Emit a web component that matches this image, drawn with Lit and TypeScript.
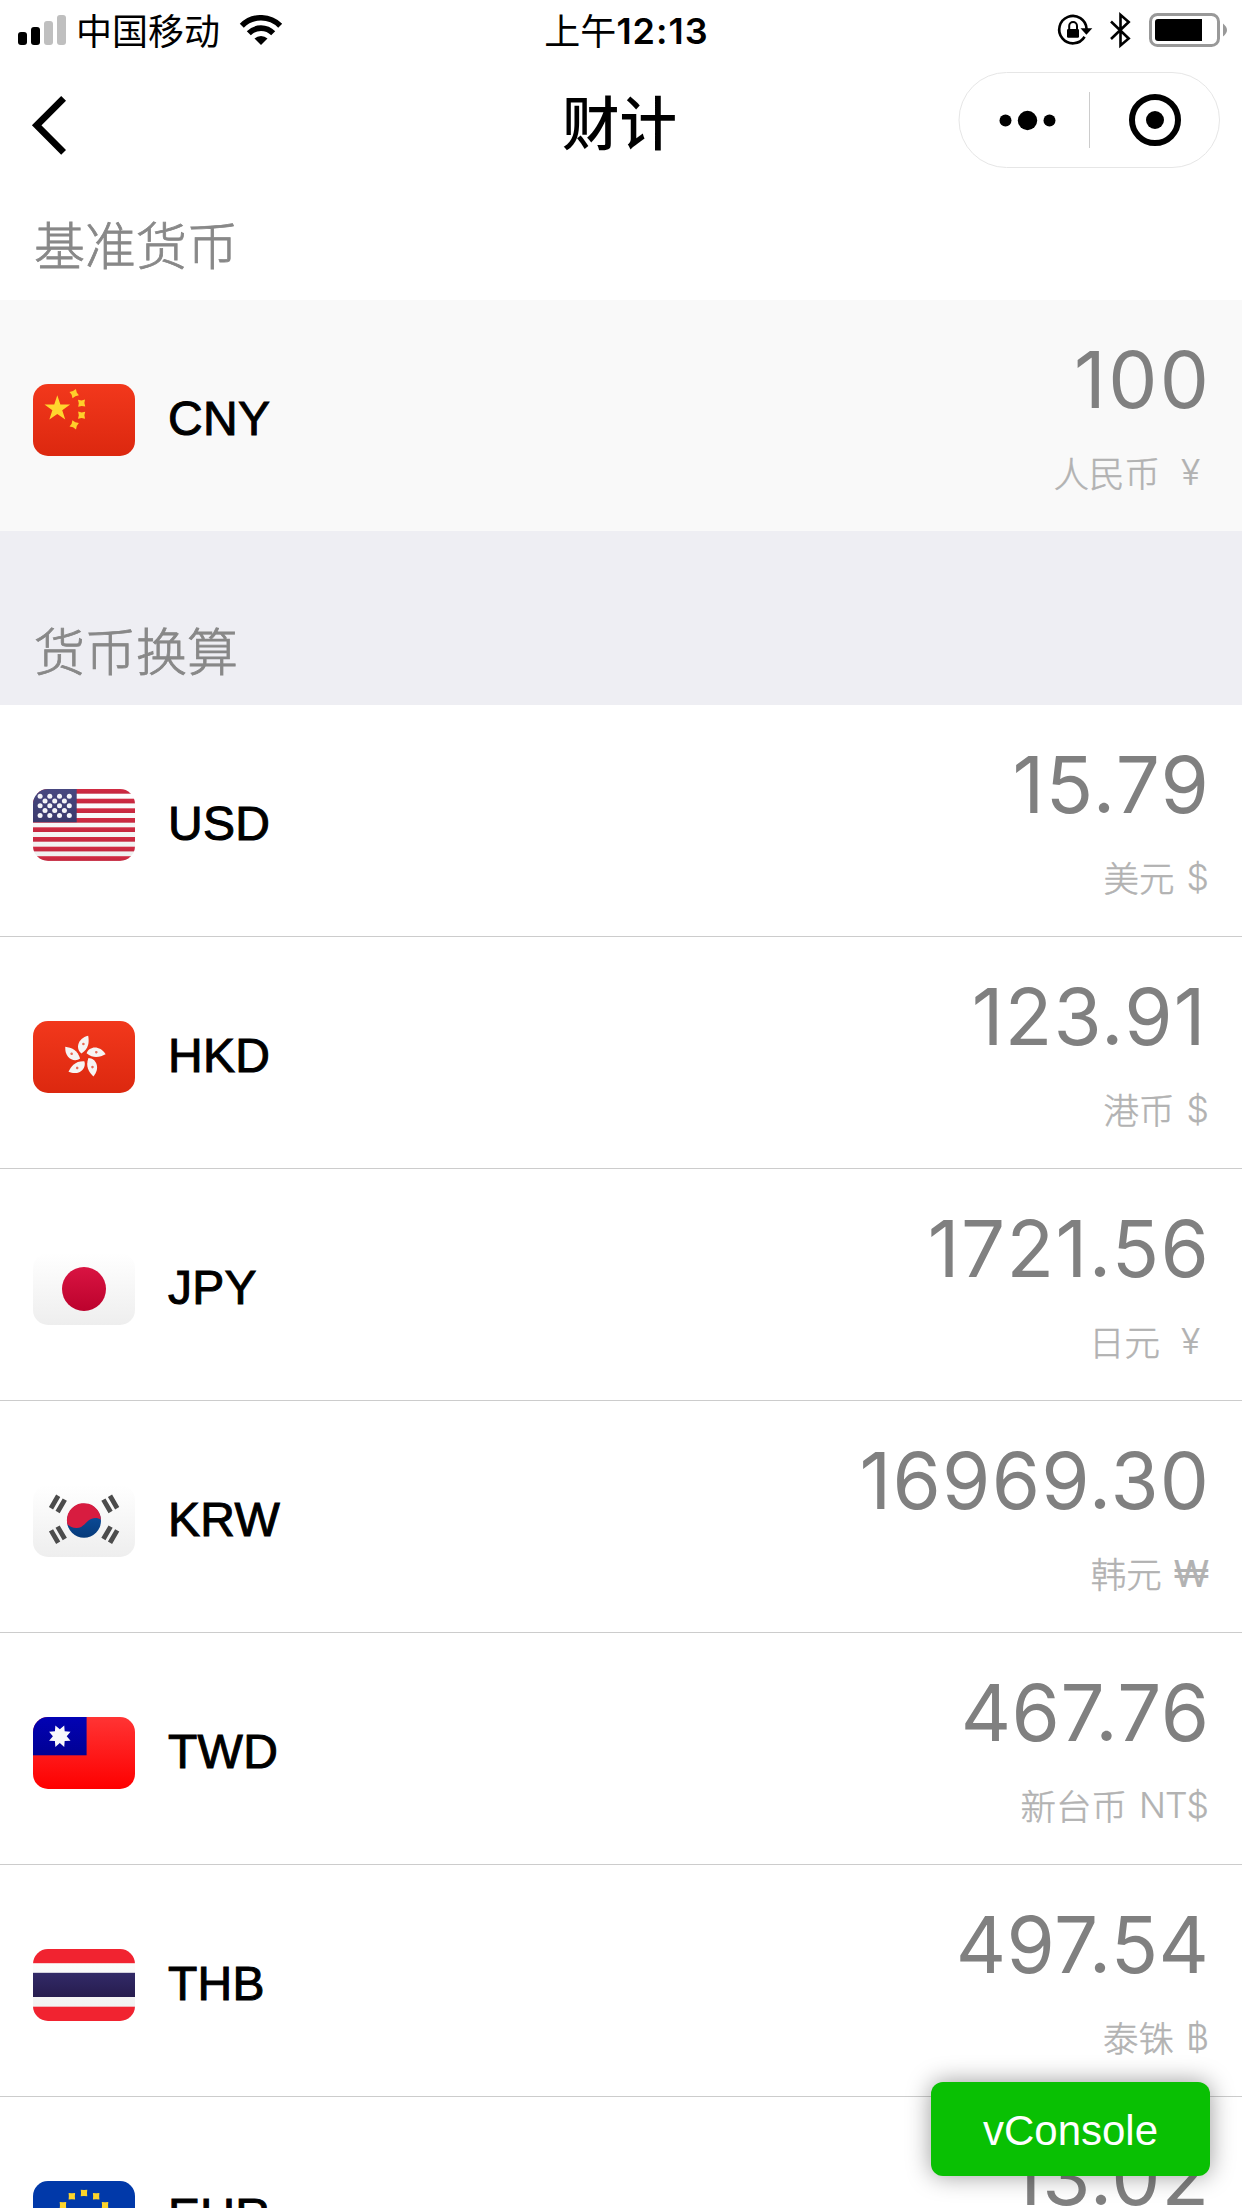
import { LitElement, html, css, svg } from "lit";
import { customElement, property } from "lit/decorators.js";

interface Rate {
  code: string;
  amount: string;
  name: string;
  sign: string;
  spacing: number;
}

const BASE: Rate = { code: "CNY", amount: "100", name: "人民币", sign: "¥", spacing: 2.4 };

const RATES: Rate[] = [
  { code: "USD", amount: "15.79", name: "美元", sign: "$", spacing: 1.6 },
  { code: "HKD", amount: "123.91", name: "港币", sign: "$", spacing: 1.2 },
  { code: "JPY", amount: "1721.56", name: "日元", sign: "¥", spacing: 1.5 },
  { code: "KRW", amount: "16969.30", name: "韩元", sign: "₩", spacing: 1.2 },
  { code: "TWD", amount: "467.76", name: "新台币", sign: "NT$", spacing: 0.5 },
  { code: "THB", amount: "497.54", name: "泰铢", sign: "฿", spacing: 0.5 },
  { code: "EUR", amount: "13.02", name: "", sign: "", spacing: 1 },
];

/** Polygon points of a star centred on (cx, cy). */
function star(cx: number, cy: number, tips: number, outer: number, inner: number, turn = 0): string {
  const points: string[] = [];
  for (let i = 0; i < tips * 2; i++) {
    const r = i % 2 ? inner : outer;
    const a = (Math.PI * i) / tips - Math.PI / 2 + turn;
    points.push(`${(cx + r * Math.cos(a)).toFixed(2)},${(cy + r * Math.sin(a)).toFixed(2)}`);
  }
  return points.join(" ");
}

const US_STARS = [0, 1, 2, 3, 4].flatMap((row) =>
  (row % 2 ? [12, 21.7, 31.4] : [7.1, 16.8, 26.5, 36.3]).map((x) => [x, 7.2 + row * 4.8]),
);

const FLAGS: Record<string, unknown> = {
  CNY: svg`
    <rect width="102" height="72" fill="url(#red)" />
    <polygon points=${star(24.3, 24.7, 5, 13.5, 5.2)} fill="#ffd62e" />
    <polygon points=${star(41.2, 9.6, 4, 5, 2.8, 0.35)} fill="#ffcf2a" />
    <polygon points=${star(48.6, 19.2, 4, 5, 2.8, 0.75)} fill="#ffcf2a" />
    <polygon points=${star(48.6, 31.2, 4, 5, 2.8, 0.8)} fill="#ffcf2a" />
    <polygon points=${star(41.2, 40.8, 4, 5, 2.8, 1.2)} fill="#ffcf2a" />`,
  USD: svg`
    <rect width="102" height="72" fill="url(#white)" />
    ${[0, 9.7, 19.3, 29, 38.3, 48, 57.7, 67.2].map(
      (y) => svg`<rect y=${y} width="102" height="4.7" fill="url(#stripe)" />`,
    )}
    <rect width="43.7" height="33.2" fill="url(#navy)" />
    ${US_STARS.map(([x, y]) => svg`<circle cx=${x} cy=${y} r="2.5" fill="#f4f4f8" />`)}`,
  HKD: svg`
    <rect width="102" height="72" fill="url(#red)" />
    ${[0, 72, 144, 216, 288].map(
      (a) => svg`<g transform="translate(51.2 36) rotate(${a})">
        <path d="M-2.8 -3.4C-8.8 -8 -7 -18.5 4 -21.2C5 -15 5 -8.5 -2.8 -3.4Z" fill="#f6f4f3" />
        <circle cx="-.8" cy="-13" r="1.3" fill="#ea6a55" />
      </g>`,
    )}`,
  JPY: svg`
    <rect width="102" height="72" fill="url(#white)" />
    <circle cx="51" cy="36" r="22" fill="url(#crimson)" />`,
  KRW: svg`
    <rect width="102" height="72" fill="url(#white)" />
    <circle cx="51" cy="35.8" r="17" fill="url(#blue)" />
    <path d="M34.4 39.2A17 17 0 1 1 67.9 34.6C64.5 32 59 32.4 55.5 35.4C51 39.5 49 43 43.5 43C39.5 43 36.8 41.6 34.4 39.2Z" fill="#d81c40" />
    <g stroke="#4c4c4c" stroke-width="4.8">
      <path d="M18 23.2L25.2 10.8M24.6 27L31.8 14.6M77 10.8L84.2 23.2M70.4 14.6L77.6 27" />
      <path d="M18 45.4L25.2 57.8M24.6 41.6L31.8 54M77 57.8L84.2 45.4M70.4 54L77.6 41.6" />
    </g>`,
  TWD: svg`
    <rect width="102" height="72" fill="url(#scarlet)" />
    <rect width="53.6" height="38.3" fill="url(#royal)" />
    <polygon points=${star(26.8, 19.2, 8, 11.6, 6.9, 0.3927)} fill="#f8f8fc" />`,
  THB: svg`
    <rect width="102" height="72" fill="url(#white)" />
    <rect width="102" height="14.2" fill="#f12330" />
    <rect y="23.8" width="102" height="24.2" fill="url(#indigo)" />
    <rect y="57.7" width="102" height="14.3" fill="#f12330" />`,
  EUR: svg`
    <rect width="102" height="72" fill="#0139a9" />
    ${Array.from({ length: 12 }, (_, i) => {
      const a = (i * Math.PI) / 6;
      return svg`<polygon points=${star(51 + 24.3 * Math.sin(a), 36.4 - 24.3 * Math.cos(a), 4, 4.6, 3, 0.785)} fill="#fdd42c" />`;
    })}`,
};

const gradient = (id: string, from: string, to: string) => svg`
  <linearGradient id=${id} x1="0" y1="0" x2="0" y2="1">
    <stop offset="0" stop-color=${from} /><stop offset="1" stop-color=${to} />
  </linearGradient>`;

@customElement("currency-flag")
export class CurrencyFlag extends LitElement {
  @property() code = "";

  static styles = css`
    :host { display: block; width: 102px; height: 72px; border-radius: 15px; overflow: hidden; }
    svg { display: block; }
  `;

  render() {
    return html`<svg width="102" height="72" viewBox="0 0 102 72">
      <defs>
        ${gradient("red", "#f2381c", "#dc280f")}
        ${gradient("white", "#ffffff", "#eeeeee")}
        ${gradient("stripe", "#d22b43", "#c4283f")}
        ${gradient("navy", "#484880", "#3a396c")}
        ${gradient("crimson", "#d91442", "#bc022d")}
        ${gradient("blue", "#0e55a8", "#063a7a")}
        ${gradient("scarlet", "#ff3434", "#fe0000")}
        ${gradient("royal", "#0202b4", "#010194")}
        ${gradient("indigo", "#322a68", "#261c4e")}
      </defs>
      ${FLAGS[this.code]}
    </svg>`;
  }
}

@customElement("currency-row")
export class CurrencyRow extends LitElement {
  @property({ attribute: false }) rate!: Rate;

  static styles = css`
    :host { display: flex; align-items: flex-start; box-sizing: border-box; padding: 0 33px; }
    .flag { margin-top: 84px; }
    .code {
      margin: 91px 0 0 33px; flex: 1; color: #000; letter-spacing: 0.3px;
      font: 48px/56px "Liberation Sans", sans-serif; -webkit-text-stroke: 1px #000;
    }
    .values { display: flex; flex-direction: column; align-items: flex-end; white-space: pre; }
    .amount { margin-top: 32px; font: 400 78px/96px Inter, sans-serif; color: #808080; }
    .name {
      margin: 17px 2px 0 0; font: 300 35.5px/54px "Noto Sans CJK SC", sans-serif; color: #b2b2b2;
      -webkit-text-stroke: 0.5px #b2b2b2; display: flex; gap: 12px;
    }
    .sign {
      margin: 1px -1px 0 0; min-width: 20px; text-align: center; letter-spacing: -1px;
      font: 300 35.5px/54px Inter, sans-serif; -webkit-text-stroke: 0.2px #b2b2b2;
    }
    .yen { min-width: 36px; }
    .won { font-weight: 400; font-size: 37px; }
  `;

  render() {
    const { code, amount, name, sign, spacing } = this.rate;
    const trailing = amount.endsWith("1") ? 3.5 : 0;
    const kind = sign === "¥" ? "yen" : sign === "₩" ? "won" : "";
    return html`
      <currency-flag class="flag" .code=${code}></currency-flag>
      <div class="code">${code}</div>
      <div class="values">
        <div class="amount" style="letter-spacing:${spacing}px;margin-right:${trailing - spacing}px">${amount}</div>
        ${name ? html`<div class="name"><span>${name}</span><span class="sign ${kind}">${sign}</span></div>` : ""}
      </div>
    `;
  }
}

@customElement("app-root")
export class AppRoot extends LitElement {
  static styles = css`
    :host {
      display: flex; flex-direction: column; position: relative; width: 1242px; height: 2208px;
      overflow: hidden; background: #fff; color: #000;
      font-family: Inter, "Noto Sans CJK SC", sans-serif;
    }
    svg { display: block; }
    .status { flex: none; display: grid; grid-template: 60px / 1fr auto 1fr; align-items: start; }
    .left { display: flex; align-items: flex-start; padding-left: 18px; }
    .bars { margin-top: 15px; }
    .carrier { margin-left: 10px; font: 400 36px/58px "Noto Sans CJK SC", sans-serif; }
    .wifi { margin: 15px 0 0 19px; }
    .time { display: flex; align-items: flex-start; padding-left: 11px; }
    .noon { font: 400 36px/58px "Noto Sans CJK SC", sans-serif; }
    .clock { margin-top: 1px; font: 600 36px/60px Inter, sans-serif; letter-spacing: 1px; }
    .right { display: flex; justify-content: flex-end; }
    .nav { display: grid; grid-template-columns: 1fr auto 1fr; height: 120px; align-items: start; flex: none; }
    .back { margin: 35px 0 0 30px; }
    .title { margin-top: 22px; padding-right: 3px; font: 500 57.5px/76px "Noto Sans CJK SC", sans-serif; }
    .capsule { justify-self: end; margin: 12px 22px 0 0; }
    .heading {
      flex: none; box-sizing: border-box; padding-left: 34px; color: #888;
      font: 300 51px/76px "Noto Sans CJK SC", sans-serif; -webkit-text-stroke: 0.8px #888;
    }
    .base { height: 120px; padding-top: 25px; }
    .list { height: 174px; padding-top: 80px; background: #eeeef3; }
    .row { flex: none; height: 232px; border-bottom: 1px solid #ccc; }
    .base-row { flex: none; height: 231px; background: #f9f9f9; }
    .console {
      position: absolute; right: 32px; bottom: 32px; width: 279px; height: 94px; border-radius: 12px;
      background: #09c003; color: #fff; box-shadow: 0 0 24px rgba(0, 0, 0, 0.4);
      font: 42px/98px "Liberation Sans", sans-serif; text-align: center;
    }
  `;

  render() {
    return html`
      <div class="status">
        <div class="left">
          <svg class="bars" width="48" height="30" viewBox="0 0 48 30">
            <rect y="17" width="9" height="13" rx="3" />
            <rect x="13" y="12" width="9" height="18" rx="3" />
            <rect x="26" y="6" width="9" height="24" rx="3" fill="#bfbfbf" />
            <rect x="39" width="9" height="30" rx="3" fill="#bfbfbf" />
          </svg>
          <span class="carrier">中国移动</span>
          <svg class="wifi" width="44" height="30" viewBox="0 0 44 30">
            <g fill="none" stroke="#000" stroke-width="5.6">
              <path d="M2.8 10.8A27 27 0 0 1 41.2 10.8" />
              <path d="M9.8 18.3A17 17 0 0 1 34.2 18.3" />
            </g>
            <path d="M22 30L15.5 23.6A9.3 9.3 0 0 1 28.5 23.6Z" />
          </svg>
        </div>
        <div class="time"><span class="noon">上午</span><span class="clock">12:13</span></div>
        <div class="right">
          <svg width="192" height="60" viewBox="1050 0 192 60">
            <path d="M1084.6 36.8A13.7 13.7 0 1 1 1086.6 29" fill="none" stroke="#000" stroke-width="2.6" />
            <path d="M1080.5 28.3H1092.3L1086.4 34.8Z" />
            <rect x="1067" y="29" width="12" height="8.8" rx="1.2" />
            <path d="M1069.2 30V26A3.9 4 0 0 1 1077 26V30" fill="none" stroke="#000" stroke-width="2" />
            <path d="M1111 21.5L1128.7 38.5L1120.5 45.5V14.8L1128.7 22L1111 39" fill="none" stroke="#000" stroke-width="2.6" />
            <rect x="1150.5" y="14.5" width="68" height="31" rx="7" fill="none" stroke="#999" stroke-width="3" />
            <path d="M1158 19H1202V41H1158A3 3 0 0 1 1155 38V22A3 3 0 0 1 1158 19Z" />
            <path d="M1223 23.5Q1231 30 1223 36.5Z" fill="#999" />
          </svg>
        </div>
      </div>
      <div class="nav">
        <svg class="back" width="40" height="62" viewBox="30 95 40 62">
          <path d="M63.6 98.3L36.7 125.3L63.6 152.3" fill="none" stroke="#000" stroke-width="6.8" />
        </svg>
        <div class="title">财计</div>
        <svg class="capsule" width="262" height="96" viewBox="958.5 72 262 96">
          <rect x="959.5" y="72.5" width="260.5" height="95" rx="47.5" fill="#fff" stroke="#e6e6e6" />
          <path d="M1090 92V148" stroke="#ccc" />
          <circle cx="1006" cy="120.5" r="6" /><circle cx="1028" cy="120.5" r="9.7" /><circle cx="1050" cy="120.5" r="6" />
          <circle cx="1155.5" cy="120" r="23" fill="none" stroke="#000" stroke-width="6" />
          <circle cx="1155.5" cy="120" r="9" />
        </svg>
      </div>
      <div class="heading base">基准货币</div>
      <currency-row class="base-row" .rate=${BASE}></currency-row>
      <div class="heading list">货币换算</div>
      ${RATES.map((rate) => html`<currency-row class="row" .rate=${rate}></currency-row>`)}
      <div class="console">vConsole</div>
    `;
  }
}
